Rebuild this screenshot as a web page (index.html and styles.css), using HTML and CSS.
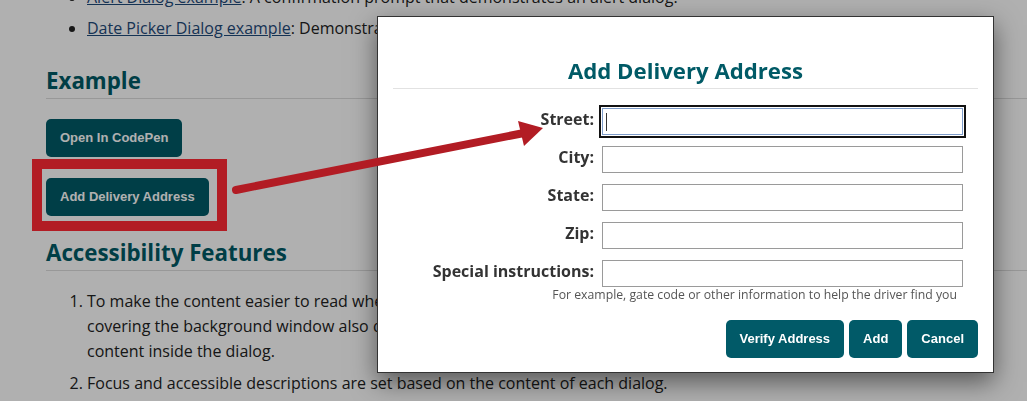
FILE: index.html
```html
<!DOCTYPE html>
<html lang="en">
<head>
<meta charset="utf-8">
<title>Modal Dialog Example</title>
<link rel="stylesheet" href="styles.css">
</head>
<body>
<main class="page">
  <ul class="examples">
    <li><a href="#">Alert Dialog example</a>: A confirmation prompt that demonstrates an alert dialog.</li>
    <li><a href="#">Date Picker Dialog example</a>: Demonstrates a dialog containing a calendar grid for choosing a date.</li>
  </ul>

  <h2 class="section-title">Example</h2>
  <div class="demo">
    <button class="btn" type="button">Open In CodePen</button>
    <button class="btn" type="button">Add Delivery Address</button>
  </div>

  <h2 class="section-title">Accessibility Features</h2>
  <ol class="features">
    <li>To make the content easier to read when the dialog is open, a translucent overlay covering the background window also dims the page and draws more attention to the content inside the dialog.</li>
    <li>Focus and accessible descriptions are set based on the content of each dialog.
      <ul class="sub">
        <li>"Add Delivery Address" dialog: dialog label is the dialog title.</li>
      </ul>
    </li>
  </ol>
</main>

<div class="backdrop"></div>

<div class="dialog" role="dialog" aria-labelledby="dialog-title">
  <h2 id="dialog-title" class="dialog-title">Add Delivery Address</h2>
  <form class="address-form">
    <label class="field-label" for="street">Street:</label>
    <input class="field is-focused" id="street" type="text">
    <label class="field-label" for="city">City:</label>
    <input class="field" id="city" type="text">
    <label class="field-label" for="state">State:</label>
    <input class="field" id="state" type="text">
    <label class="field-label" for="zip">Zip:</label>
    <input class="field" id="zip" type="text">
    <label class="field-label" for="special">Special instructions:</label>
    <input class="field" id="special" type="text">
  </form>
  <p class="field-help">For example, gate code or other information to help the driver find you</p>
  <div class="dialog-actions">
    <button class="btn" type="button">Verify Address</button>
    <button class="btn" type="button">Add</button>
    <button class="btn" type="button">Cancel</button>
  </div>
</div>

<div class="callout-box"></div>
<svg class="callout-arrow" width="1027" height="401" viewBox="0 0 1027 401" aria-hidden="true">
  <line x1="236" y1="190" x2="524" y2="133" stroke="#b21c24" stroke-width="8" stroke-linecap="round"/>
  <polygon points="543,128 518,121 524,146" fill="#b21c24"/>
</svg>
</body>
</html>
```

FILE: styles.css
```css
* {
  box-sizing: border-box;
}

html,
body {
  margin: 0;
  height: 100%;
}

body {
  font-family: "Open Sans", "Noto Sans", sans-serif;
  color: #222;
  background: #fff;
  overflow: hidden;
}

/* ---------- page ---------- */
.page {
  padding-left: 46px;
  margin-top: -15px;
  font-size: 16px;
  line-height: 25px;
}

.examples {
  margin: 0;
  padding-left: 41px;
}

.examples li {
  margin-bottom: 6px;
  white-space: nowrap;
}

.examples li:last-child {
  margin-bottom: 0;
}

.page a {
  color: #1f4a7a;
}

.section-title {
  margin: 26px 0 0;
  padding-bottom: 3px;
  font-size: 22.3px;
  line-height: 28px;
  font-weight: 700;
  color: #005a66;
  border-bottom: 1px solid #dcdcdc;
}

.demo + .section-title {
  margin-top: 23px;
}

.demo {
  display: flex;
  flex-direction: column;
  align-items: flex-start;
  gap: 21px;
  margin-top: 20px;
}

.btn {
  height: 38px;
  padding: 0 14px;
  border: none;
  border-radius: 5px;
  background: #015a68;
  color: #fff;
  font-family: "Liberation Sans", Arial, sans-serif;
  font-size: 13px;
  font-weight: 700;
  line-height: 16px;
  cursor: pointer;
}

.features {
  margin: 18px 0 0;
  padding-left: 41px;
  max-width: 681px;
}

.features > li {
  margin-bottom: 7px;
}

.sub {
  margin: 0;
  padding-left: 22px;
}

/* ---------- modal ---------- */
.backdrop {
  position: fixed;
  inset: 0;
  background: rgba(0, 0, 0, 0.31);
}

.dialog {
  position: absolute;
  left: 377px;
  top: 16px;
  width: 617px;
  padding: 0 15px 14px;
  background: #fff;
  border: 1px solid #333;
  box-shadow: 0 9px 24px rgba(0, 0, 0, 0.5);
}

.dialog-title {
  margin: 0;
  padding: 39px 0 2px;
  font-size: 22.2px;
  line-height: 30px;
  font-weight: 700;
  text-align: center;
  color: #005a66;
  border-bottom: 1px solid #e2e2e2;
}

.address-form {
  display: grid;
  grid-template-columns: 201px 361px;
  column-gap: 8px;
  row-gap: 11px;
  margin-top: 19px;
}

.field-label {
  align-self: start;
  text-align: right;
  font-size: 16px;
  line-height: 23px;
  font-weight: 700;
  color: #333;
}

.field {
  height: 27px;
  margin: 0;
  padding: 0 4px;
  border: 1px solid #9a9a9a;
  font-family: "Open Sans", sans-serif;
  font-size: 15px;
  background: #fff;
}

.field.is-focused {
  border-color: #7e9cc9;
  outline: 2px solid #111;
  outline-offset: 1px;
  background-image: linear-gradient(#333, #333);
  background-repeat: no-repeat;
  background-position: 3px 4px;
  background-size: 1px 18px;
}

.field-help {
  margin: 0;
  padding-right: 21px;
  text-align: right;
  font-size: 12.25px;
  line-height: 16px;
  color: #555;
}

.dialog-actions {
  display: flex;
  justify-content: flex-end;
  gap: 5px;
  margin-top: 17px;
}

/* ---------- annotation ---------- */
.callout-box {
  position: absolute;
  left: 32px;
  top: 159px;
  width: 195px;
  height: 72px;
  border: 10px solid #b21c24;
}

.callout-arrow {
  position: absolute;
  left: 0;
  top: 0;
  pointer-events: none;
}
```
